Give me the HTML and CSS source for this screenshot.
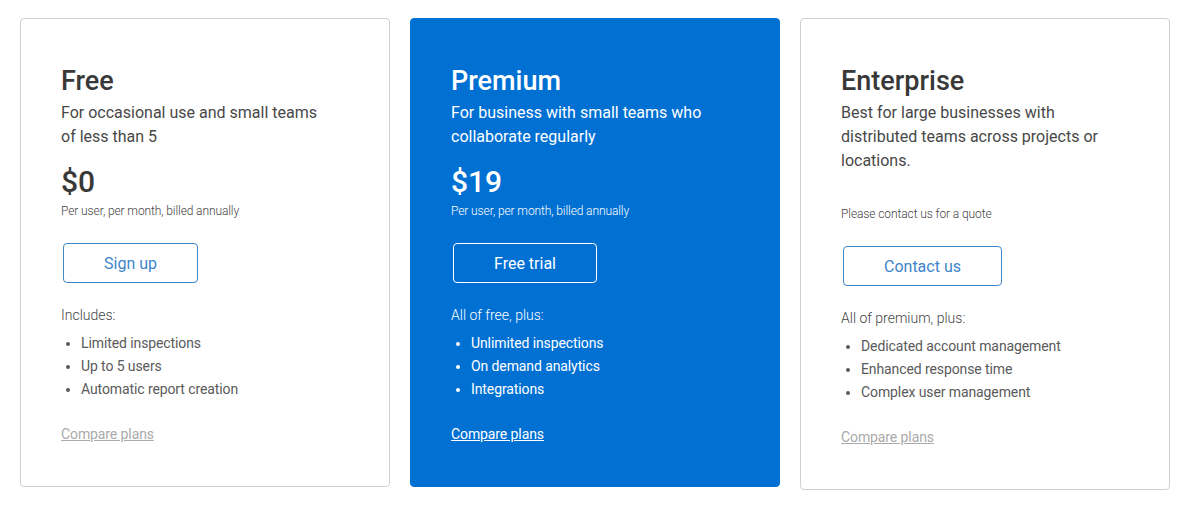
FILE: index.html
```html
<!DOCTYPE html>
<html lang="en">
<head>
<meta charset="utf-8">
<title>Plans</title>
<link rel="stylesheet" href="styles.css">
</head>
<body>
<div class="plans">
  <div class="card">
    <h2 class="title">Free</h2>
    <p class="subtitle">For occasional use and small teams of less than 5</p>
    <div class="price">$0</div>
    <p class="note">Per user, per month, billed annually</p>
    <a class="btn" href="#">Sign up</a>
    <p class="includes">Includes:</p>
    <ul class="features">
      <li>Limited inspections</li>
      <li>Up to 5 users</li>
      <li>Automatic report creation</li>
    </ul>
    <a class="compare" href="#">Compare plans</a>
  </div>
  <div class="card card-featured">
    <h2 class="title">Premium</h2>
    <p class="subtitle">For business with small teams who collaborate regularly</p>
    <div class="price">$19</div>
    <p class="note">Per user, per month, billed annually</p>
    <a class="btn" href="#">Free trial</a>
    <p class="includes">All of free, plus:</p>
    <ul class="features">
      <li>Unlimited inspections</li>
      <li>On demand analytics</li>
      <li>Integrations</li>
    </ul>
    <a class="compare" href="#">Compare plans</a>
  </div>
  <div class="card">
    <h2 class="title">Enterprise</h2>
    <p class="subtitle">Best for large businesses with distributed teams across projects or locations.</p>
    <p class="note note-quote">Please contact us for a quote</p>
    <a class="btn" href="#">Contact us</a>
    <p class="includes">All of premium, plus:</p>
    <ul class="features">
      <li>Dedicated account management</li>
      <li>Enhanced response time</li>
      <li>Complex user management</li>
    </ul>
    <a class="compare" href="#">Compare plans</a>
  </div>
</div>
</body>
</html>
```

FILE: styles.css
```css
* { box-sizing: border-box; }

body {
  margin: 0;
  background: #fff;
  font-family: Roboto, "Liberation Sans", Arial, sans-serif;
  color: #444;
}

.plans {
  display: flex;
  align-items: flex-start;
  gap: 20px;
  padding: 18px 0 0 20px;
}

.card {
  width: 370px;
  display: flex;
  flex-direction: column;
  align-items: flex-start;
  border: 1px solid #d0d0d0;
  border-radius: 4px;
  padding: 46px 40px 42px 40px;
  background: #fff;
}

.card-featured {
  background: #0070d3;
  border-color: #0070d3;
  color: #fff;
}

.title {
  margin: 0;
  font-size: 27px;
  line-height: 32px;
  font-weight: 500;
  color: #383838;
}

.subtitle {
  margin: 4px 0 0;
  max-width: 266px;
  font-size: 16px;
  line-height: 24px;
  font-weight: 400;
  color: #484848;
}

.price {
  margin-top: 15px;
  font-size: 30px;
  line-height: 36px;
  font-weight: 500;
  color: #383838;
}

.note {
  margin: 3px 0 0;
  font-size: 12px;
  line-height: 16px;
  font-weight: 300;
  color: #444;
  letter-spacing: -0.1px;
}

.note-quote {
  margin-top: 33px;
}

.btn {
  margin: 24px 0 0 2px;
  height: 40px;
  padding: 0 40px;
  display: flex;
  align-items: center;
  border: 1px solid #3d88c9;
  border-radius: 4px;
  font-size: 16px;
  color: #3d85c9;
  text-decoration: none;
}

.includes {
  margin: 22px 0 0;
  font-size: 14px;
  line-height: 20px;
  font-weight: 300;
  color: #444;
}

.features {
  margin: 7px 0 0;
  padding-left: 20px;
  font-size: 14px;
  line-height: 23px;
  font-weight: 400;
  color: #5a5a5a;
  letter-spacing: -0.1px;
}

.compare {
  margin-top: 23px;
  font-size: 14px;
  line-height: 20px;
  color: #aaa;
  text-decoration: underline;
  letter-spacing: -0.1px;
}

.card-featured .title,
.card-featured .subtitle,
.card-featured .price,
.card-featured .note,
.card-featured .includes,
.card-featured .features,
.card-featured .compare {
  color: #fff;
}

.card-featured .btn {
  border-color: #fff;
  color: #fff;
}
```
